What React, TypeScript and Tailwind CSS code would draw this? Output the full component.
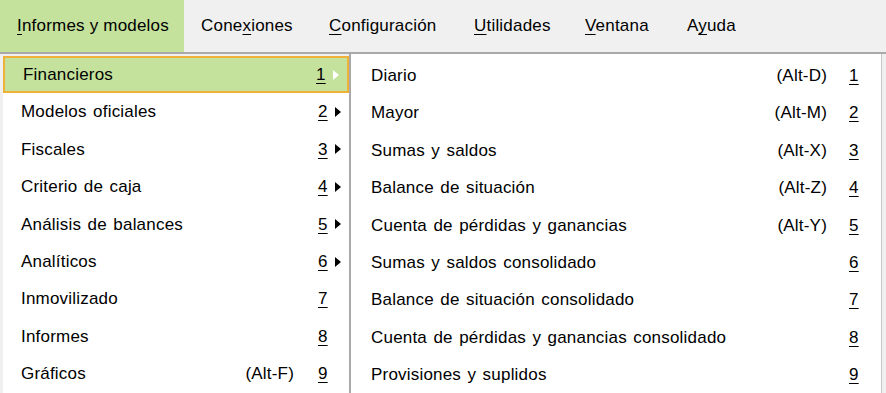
import React from "react";

type LeftItem = { label: string; key: string; alt?: string; sub?: boolean };
type RightItem = { label: string; key: string; alt?: string };

const leftItems: LeftItem[] = [
  { label: "Financieros", key: "1", sub: true },
  { label: "Modelos oficiales", key: "2", sub: true },
  { label: "Fiscales", key: "3", sub: true },
  { label: "Criterio de caja", key: "4", sub: true },
  { label: "Análisis de balances", key: "5", sub: true },
  { label: "Analíticos", key: "6", sub: true },
  { label: "Inmovilizado", key: "7" },
  { label: "Informes", key: "8" },
  { label: "Gráficos", key: "9", alt: "(Alt-F)" },
];

const rightItems: RightItem[] = [
  { label: "Diario", key: "1", alt: "(Alt-D)" },
  { label: "Mayor", key: "2", alt: "(Alt-M)" },
  { label: "Sumas y saldos", key: "3", alt: "(Alt-X)" },
  { label: "Balance de situación", key: "4", alt: "(Alt-Z)" },
  { label: "Cuenta de pérdidas y ganancias", key: "5", alt: "(Alt-Y)" },
  { label: "Sumas y saldos consolidado", key: "6" },
  { label: "Balance de situación consolidado", key: "7" },
  { label: "Cuenta de pérdidas y ganancias consolidado", key: "8" },
  { label: "Provisiones y suplidos", key: "9" },
];

function Arrow({ white }: { white?: boolean }) {
  return (
    <svg width="6" height="10" viewBox="0 0 6 10" className="shrink-0">
      <path d="M0 0 L6 5 L0 10 Z" fill={white ? "#ffffff" : "#000000"} />
    </svg>
  );
}

function TopItem({
  pre,
  u,
  post,
  width,
  active,
}: {
  pre: string;
  u: string;
  post: string;
  width: string;
  active?: boolean;
}) {
  return (
    <div className={`h-full flex items-center pl-[17px] shrink-0 ${width} ${active ? "bg-[#c4e29c]" : ""}`}>
      <span className="whitespace-nowrap">
        {pre}
        <span className="underline underline-offset-[3px]">{u}</span>
        {post}
      </span>
    </div>
  );
}

export default function App() {
  return (
    <div
      className="w-[886px] h-[393px] overflow-hidden bg-white text-[17px] tracking-[0.2px] [word-spacing:1.5px] text-black"
      style={{ fontFamily: '"Liberation Sans", Arial, sans-serif' }}
    >
      {/* Menu bar */}
      <div className="h-[52px] bg-[#f0f0f0] flex items-stretch tracking-[0.2px] [word-spacing:0px]">
        <TopItem pre="" u="I" post="nformes y modelos" width="w-[184px]" active />
        <TopItem pre="Cone" u="x" post="iones" width="w-[128px]" />
        <TopItem pre="" u="C" post="onfiguración" width="w-[145px]" />
        <TopItem pre="" u="U" post="tilidades" width="w-[111px]" />
        <TopItem pre="" u="V" post="entana" width="w-[102px]" />
        <TopItem pre="A" u="y" post="uda" width="w-[83px]" />
      </div>
      <div className="h-[2px] bg-[#a9a9a9]" />

      <div className="flex">
        {/* Left menu */}
        <div className="w-[349px] bg-[#f0f0f0] pl-[3px] pt-[2px]">
          <div className="bg-white">
            {leftItems.map((it, i) => {
              const hl = i === 0;
              return (
                <div
                  key={it.label}
                  className={`h-[37.4px] flex items-center pl-[18px] pr-[8px] ${
                    hl ? "bg-[#c4e29c] border-2 border-[#f0b13a] pl-[16px]" : ""
                  }`}
                >
                  <span className="flex-1">{it.label}</span>
                  {it.alt && <span className="mr-[24px]">{it.alt}</span>}
                  <span className="w-[10px] underline underline-offset-[3px]">{it.key}</span>
                  <span className="w-[13px] flex justify-end">{it.sub && <Arrow white={hl} />}</span>
                </div>
              );
            })}
          </div>
        </div>
        <div className="w-[2px] bg-[#a9a9a9] h-[360px]" />

        {/* Right submenu */}
        <div className="w-[530px] bg-white pt-[3px]">
          {rightItems.map((it) => (
            <div key={it.label} className="h-[37.4px] flex items-center pl-[20px] pr-[22px]">
              <span className="flex-1">{it.label}</span>
              {it.alt && <span className="mr-[22px]">{it.alt}</span>}
              <span className="w-[10px] underline underline-offset-[3px]">{it.key}</span>
            </div>
          ))}
        </div>
        <div className="w-[1px] bg-[#c8c8c8] h-[360px]" />
        <div className="flex-1 bg-[#f0f0f0]" />
      </div>
    </div>
  );
}
